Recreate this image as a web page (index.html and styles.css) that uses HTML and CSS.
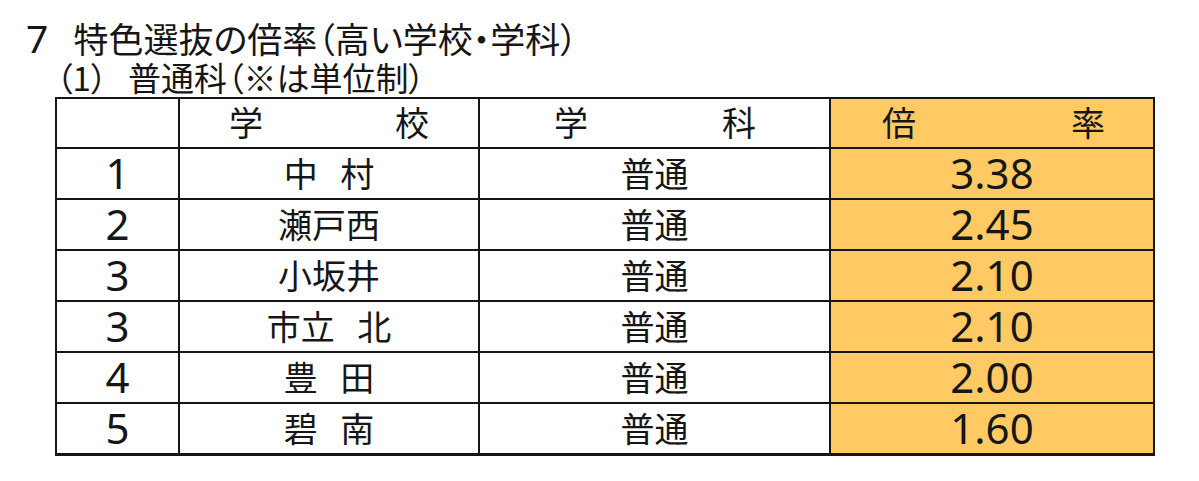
FILE: index.html
```html
<!DOCTYPE html>
<html lang="ja">
<head>
<meta charset="utf-8">
<title>特色選抜の倍率</title>
<link rel="stylesheet" href="styles.css">
</head>
<body>
<div class="page">
  <h1 class="title"><span class="title-no">7</span><span class="title-text">特色選抜の倍率（高い学校・学科）</span></h1>
  <h2 class="subtitle"><span class="sub-no">（1）</span>普通科（※は単位制）</h2>
  <table class="ratio-table">
    <colgroup>
      <col class="c-rank">
      <col class="c-school">
      <col class="c-dept">
      <col class="c-ratio">
    </colgroup>
    <thead>
      <tr>
        <th class="h-blank"></th>
        <th class="h-school">学校</th>
        <th class="h-dept">学科</th>
        <th class="h-ratio hl">倍率</th>
      </tr>
    </thead>
    <tbody>
      <tr><td class="num">1</td><td class="jp sp">中 村</td><td class="jp">普通</td><td class="num hl">3.38</td></tr>
      <tr><td class="num">2</td><td class="jp">瀬戸西</td><td class="jp">普通</td><td class="num hl">2.45</td></tr>
      <tr><td class="num">3</td><td class="jp">小坂井</td><td class="jp">普通</td><td class="num hl">2.10</td></tr>
      <tr><td class="num">3</td><td class="jp sp">市立 北</td><td class="jp">普通</td><td class="num hl">2.10</td></tr>
      <tr><td class="num">4</td><td class="jp sp">豊 田</td><td class="jp">普通</td><td class="num hl">2.00</td></tr>
      <tr><td class="num">5</td><td class="jp sp">碧 南</td><td class="jp">普通</td><td class="num hl">1.60</td></tr>
    </tbody>
  </table>
</div>
</body>
</html>
```

FILE: styles.css
```css
html, body {
  margin: 0;
  padding: 0;
  background: #ffffff;
}

body {
  color: #161616;
  font-family: "Noto Sans CJK JP", "Noto Sans", sans-serif;
}

.page {
  padding-top: 20px;
}

.title {
  margin: 0;
  padding-left: 26px;
  font-weight: normal;
  font-size: 35px;
  line-height: 35px;
  height: 35px;
  white-space: nowrap;
  font-feature-settings: "palt";
}

.title-no {
  display: inline-block;
  width: 47.5px;
  font-family: "Noto Sans", sans-serif;
  font-size: 39px;
  line-height: 35px;
}

.subtitle {
  margin: 6px 0 0 0;
  padding-left: 56px;
  font-weight: normal;
  font-size: 33px;
  line-height: 33px;
  height: 33px;
  white-space: nowrap;
  font-feature-settings: "palt";
}

.sub-no {
  display: inline-block;
  width: 72px;
}

.ratio-table {
  margin: 3px 0 0 55px;
  width: 1100px;
  table-layout: fixed;
  border-collapse: separate;
  border-spacing: 2px;
  background: #161616;
  border-bottom: 1px solid #161616;
}

.c-rank { width: 121px; }
.c-school { width: 298px; }
.c-dept { width: 349px; }
.c-ratio { width: 322px; }

.ratio-table th,
.ratio-table td {
  padding: 0;
  background: #ffffff;
  text-align: center;
  vertical-align: middle;
  font-weight: normal;
  white-space: nowrap;
}

.ratio-table thead tr { height: 48px; }
.ratio-table tbody tr { height: 49px; }

.ratio-table th {
  font-size: 34px;
  line-height: 1;
  text-align: justify;
  text-align-last: justify;
  padding-bottom: 2px;
}

.ratio-table .h-school { padding-left: 49px; padding-right: 49px; }
.ratio-table .h-dept { padding-left: 74px; padding-right: 73px; }
.ratio-table .h-ratio { padding-left: 51px; padding-right: 48px; }

.ratio-table .hl {
  background: #ffc964;
}

.ratio-table .jp {
  font-size: 34px;
  line-height: 1;
  padding-bottom: 2px;
}

.ratio-table .sp {
  word-spacing: 15px;
}

.ratio-table .num {
  font-family: "Noto Sans", sans-serif;
  font-size: 42px;
  line-height: 1;
  padding-bottom: 1px;
}
```
